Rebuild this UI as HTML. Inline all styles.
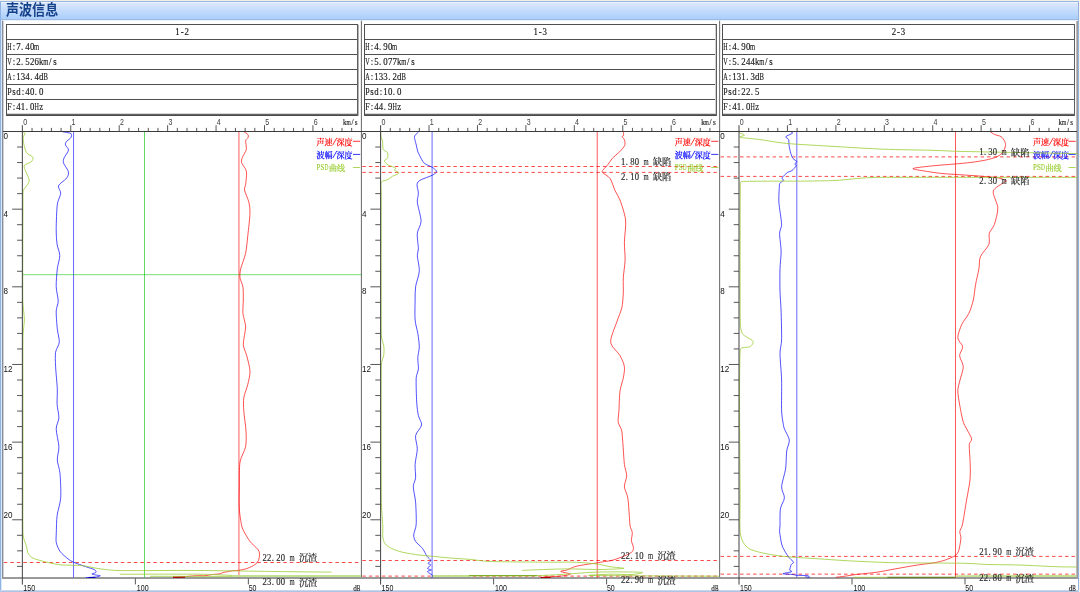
<!DOCTYPE html>
<html lang="zh"><head><meta charset="utf-8"><title>声波信息</title>
<style>
html,body{margin:0;padding:0;background:#fff;}
body{width:1080px;height:592px;overflow:hidden;font-family:"Liberation Sans",sans-serif;}
svg{display:block;will-change:transform;}
</style></head><body>
<svg width="1080" height="592" viewBox="0 0 1080 592">
<defs>
<linearGradient id="hg" x1="0" y1="0" x2="0" y2="1"><stop offset="0.1" stop-color="#dbe8fc"/><stop offset="0.95" stop-color="#abcefb"/></linearGradient>
</defs>
<rect x="0" y="0" width="1080" height="592" fill="#fff"/>
<rect x="0" y="0" width="1080" height="1" fill="#f1efe9"/>
<rect x="1079" y="0" width="1" height="592" fill="#f6f3ef"/>
<rect x="0" y="1" width="1079" height="19" fill="url(#hg)"/>
<rect x="0" y="1" width="1079" height="1" fill="#98b6de"/>
<rect x="1" y="2" width="1077" height="1" fill="#eef4fd"/>
<rect x="0" y="19" width="1079" height="1" fill="#9bbae6"/>
<rect x="1" y="20" width="1077" height="1" fill="#eaf1fb"/>
<rect x="0" y="2" width="1" height="590" fill="#8fb3e4"/>
<rect x="1" y="20" width="1" height="570" fill="#dce8f8"/>
<rect x="1078" y="2" width="1" height="590" fill="#94b2dc"/>
<rect x="0" y="590" width="1079" height="1" fill="#c6d7ee"/>
<rect x="0" y="591" width="1079" height="1" fill="#aec4e2"/>
<text transform="translate(5.9 15.45) scale(1 1.115)" font-family="'Liberation Sans','Noto Sans CJK SC',sans-serif" font-size="13.1" font-weight="bold" fill="#15428b">声波信息</text>
<path d="M6 24.5H358" stroke="#4f4f4f" stroke-width="1"/>
<path d="M6 39.5H358" stroke="#4f4f4f" stroke-width="1"/>
<path d="M6 54.5H358" stroke="#4f4f4f" stroke-width="1"/>
<path d="M6 69.5H358" stroke="#4f4f4f" stroke-width="1"/>
<path d="M6 84.5H358" stroke="#4f4f4f" stroke-width="1"/>
<path d="M6 99.5H358" stroke="#4f4f4f" stroke-width="1"/>
<path d="M7 113.5H357" stroke="#d6d6d6" stroke-width="1"/>
<path d="M6 114.5H358.1" stroke="#646464" stroke-width="1"/>
<path d="M6 115.5H358.1" stroke="#4a4a4a" stroke-width="1"/>
<path d="M6.5 24V116" stroke="#4f4f4f" stroke-width="1"/>
<path d="M357.5 24V116" stroke="#5e5e5e" stroke-width="1"/>
<path d="M358.5 24.5V116" stroke="#b2b2b2" stroke-width="1"/>
<g transform="translate(175.28 35.1)" font-family="Liberation Serif" font-size="9.8" fill="#1a1a1a" stroke="#1a1a1a" stroke-width="0.16" text-anchor="middle"><text transform="scale(0.9 1)" x="2.53 7.58 12.64" xml:space="preserve">1-2</text></g>
<g transform="translate(7.1 49.9)" font-family="Liberation Serif" font-size="9.8" fill="#1a1a1a" stroke="#1a1a1a" stroke-width="0.16" text-anchor="middle"><text transform="scale(0.624 1)" x="3.65" xml:space="preserve">H</text><text transform="scale(0.9 1)" x="7.58 12.64 16.78 22.75 27.81" xml:space="preserve">:7.40</text><text transform="scale(0.668 1)" x="44.27" xml:space="preserve">m</text></g>
<g transform="translate(7.1 64.9)" font-family="Liberation Serif" font-size="9.8" fill="#1a1a1a" stroke="#1a1a1a" stroke-width="0.16" text-anchor="middle"><text transform="scale(0.624 1)" x="3.65" xml:space="preserve">V</text><text transform="scale(0.9 1)" x="7.58 12.64 16.78 22.75 27.81 32.86 37.92" xml:space="preserve">:2.526k</text><text transform="scale(0.668 1)" x="57.9" xml:space="preserve">m</text><text transform="scale(0.9 1)" x="48.03 53.08" xml:space="preserve">/s</text></g>
<g transform="translate(7.1 79.9)" font-family="Liberation Serif" font-size="9.8" fill="#1a1a1a" stroke="#1a1a1a" stroke-width="0.16" text-anchor="middle"><text transform="scale(0.624 1)" x="3.65" xml:space="preserve">A</text><text transform="scale(0.9 1)" x="7.58 12.64 17.69 22.75 26.9 32.86 37.92" xml:space="preserve">:134.4d</text><text transform="scale(0.675 1)" x="57.3" xml:space="preserve">B</text></g>
<g transform="translate(7.1 94.9)" font-family="Liberation Serif" font-size="9.8" fill="#1a1a1a" stroke="#1a1a1a" stroke-width="0.16" text-anchor="middle"><text transform="scale(0.81 1)" x="2.81" xml:space="preserve">P</text><text transform="scale(0.9 1)" x="7.58 12.64 17.69 22.75 27.81 31.95 37.92" xml:space="preserve">sd:40.0</text></g>
<g transform="translate(7.1 109.9)" font-family="Liberation Serif" font-size="9.8" fill="#1a1a1a" stroke="#1a1a1a" stroke-width="0.16" text-anchor="middle"><text transform="scale(0.81 1)" x="2.81" xml:space="preserve">F</text><text transform="scale(0.9 1)" x="7.58 12.64 17.69 21.84 27.81" xml:space="preserve">:41.0</text><text transform="scale(0.624 1)" x="47.4" xml:space="preserve">H</text><text transform="scale(0.9 1)" x="37.92" xml:space="preserve">z</text></g>
<path d="M364 24.5H717" stroke="#4f4f4f" stroke-width="1"/>
<path d="M364 39.5H717" stroke="#4f4f4f" stroke-width="1"/>
<path d="M364 54.5H717" stroke="#4f4f4f" stroke-width="1"/>
<path d="M364 69.5H717" stroke="#4f4f4f" stroke-width="1"/>
<path d="M364 84.5H717" stroke="#4f4f4f" stroke-width="1"/>
<path d="M364 99.5H717" stroke="#4f4f4f" stroke-width="1"/>
<path d="M365 113.5H715.3" stroke="#d6d6d6" stroke-width="1"/>
<path d="M364 114.5H716.4" stroke="#646464" stroke-width="1"/>
<path d="M364 115.5H716.4" stroke="#4a4a4a" stroke-width="1"/>
<path d="M364.5 24V116" stroke="#4f4f4f" stroke-width="1"/>
<path d="M716.5 24V116" stroke="#5e5e5e" stroke-width="1"/>
<path d="M715.5 25V114" stroke="#d0d0d0" stroke-width="1"/>
<g transform="translate(533.42 35.1)" font-family="Liberation Serif" font-size="9.8" fill="#1a1a1a" stroke="#1a1a1a" stroke-width="0.16" text-anchor="middle"><text transform="scale(0.9 1)" x="2.53 7.58 12.64" xml:space="preserve">1-3</text></g>
<g transform="translate(365.1 49.9)" font-family="Liberation Serif" font-size="9.8" fill="#1a1a1a" stroke="#1a1a1a" stroke-width="0.16" text-anchor="middle"><text transform="scale(0.624 1)" x="3.65" xml:space="preserve">H</text><text transform="scale(0.9 1)" x="7.58 12.64 16.78 22.75 27.81" xml:space="preserve">:4.90</text><text transform="scale(0.668 1)" x="44.27" xml:space="preserve">m</text></g>
<g transform="translate(365.1 64.9)" font-family="Liberation Serif" font-size="9.8" fill="#1a1a1a" stroke="#1a1a1a" stroke-width="0.16" text-anchor="middle"><text transform="scale(0.624 1)" x="3.65" xml:space="preserve">V</text><text transform="scale(0.9 1)" x="7.58 12.64 16.78 22.75 27.81 32.86 37.92" xml:space="preserve">:5.077k</text><text transform="scale(0.668 1)" x="57.9" xml:space="preserve">m</text><text transform="scale(0.9 1)" x="48.03 53.08" xml:space="preserve">/s</text></g>
<g transform="translate(365.1 79.9)" font-family="Liberation Serif" font-size="9.8" fill="#1a1a1a" stroke="#1a1a1a" stroke-width="0.16" text-anchor="middle"><text transform="scale(0.624 1)" x="3.65" xml:space="preserve">A</text><text transform="scale(0.9 1)" x="7.58 12.64 17.69 22.75 26.9 32.86 37.92" xml:space="preserve">:133.2d</text><text transform="scale(0.675 1)" x="57.3" xml:space="preserve">B</text></g>
<g transform="translate(365.1 94.9)" font-family="Liberation Serif" font-size="9.8" fill="#1a1a1a" stroke="#1a1a1a" stroke-width="0.16" text-anchor="middle"><text transform="scale(0.81 1)" x="2.81" xml:space="preserve">P</text><text transform="scale(0.9 1)" x="7.58 12.64 17.69 22.75 27.81 31.95 37.92" xml:space="preserve">sd:10.0</text></g>
<g transform="translate(365.1 109.9)" font-family="Liberation Serif" font-size="9.8" fill="#1a1a1a" stroke="#1a1a1a" stroke-width="0.16" text-anchor="middle"><text transform="scale(0.81 1)" x="2.81" xml:space="preserve">F</text><text transform="scale(0.9 1)" x="7.58 12.64 17.69 21.84 27.81" xml:space="preserve">:44.9</text><text transform="scale(0.624 1)" x="47.4" xml:space="preserve">H</text><text transform="scale(0.9 1)" x="37.92" xml:space="preserve">z</text></g>
<path d="M722 24.5H1075" stroke="#4f4f4f" stroke-width="1"/>
<path d="M722 39.5H1075" stroke="#4f4f4f" stroke-width="1"/>
<path d="M722 54.5H1075" stroke="#4f4f4f" stroke-width="1"/>
<path d="M722 69.5H1075" stroke="#4f4f4f" stroke-width="1"/>
<path d="M722 84.5H1075" stroke="#4f4f4f" stroke-width="1"/>
<path d="M722 99.5H1075" stroke="#4f4f4f" stroke-width="1"/>
<path d="M723 113.5H1073.8" stroke="#d6d6d6" stroke-width="1"/>
<path d="M722 114.5H1074.9" stroke="#646464" stroke-width="1"/>
<path d="M722 115.5H1074.9" stroke="#4a4a4a" stroke-width="1"/>
<path d="M722.5 24V116" stroke="#4f4f4f" stroke-width="1"/>
<path d="M1074.5 24V116" stroke="#5e5e5e" stroke-width="1"/>
<g transform="translate(891.67 35.1)" font-family="Liberation Serif" font-size="9.8" fill="#1a1a1a" stroke="#1a1a1a" stroke-width="0.16" text-anchor="middle"><text transform="scale(0.9 1)" x="2.53 7.58 12.64" xml:space="preserve">2-3</text></g>
<g transform="translate(723.1 49.9)" font-family="Liberation Serif" font-size="9.8" fill="#1a1a1a" stroke="#1a1a1a" stroke-width="0.16" text-anchor="middle"><text transform="scale(0.624 1)" x="3.65" xml:space="preserve">H</text><text transform="scale(0.9 1)" x="7.58 12.64 16.78 22.75 27.81" xml:space="preserve">:4.90</text><text transform="scale(0.668 1)" x="44.27" xml:space="preserve">m</text></g>
<g transform="translate(723.1 64.9)" font-family="Liberation Serif" font-size="9.8" fill="#1a1a1a" stroke="#1a1a1a" stroke-width="0.16" text-anchor="middle"><text transform="scale(0.624 1)" x="3.65" xml:space="preserve">V</text><text transform="scale(0.9 1)" x="7.58 12.64 16.78 22.75 27.81 32.86 37.92" xml:space="preserve">:5.244k</text><text transform="scale(0.668 1)" x="57.9" xml:space="preserve">m</text><text transform="scale(0.9 1)" x="48.03 53.08" xml:space="preserve">/s</text></g>
<g transform="translate(723.1 79.9)" font-family="Liberation Serif" font-size="9.8" fill="#1a1a1a" stroke="#1a1a1a" stroke-width="0.16" text-anchor="middle"><text transform="scale(0.624 1)" x="3.65" xml:space="preserve">A</text><text transform="scale(0.9 1)" x="7.58 12.64 17.69 22.75 26.9 32.86 37.92" xml:space="preserve">:131.3d</text><text transform="scale(0.675 1)" x="57.3" xml:space="preserve">B</text></g>
<g transform="translate(723.1 94.9)" font-family="Liberation Serif" font-size="9.8" fill="#1a1a1a" stroke="#1a1a1a" stroke-width="0.16" text-anchor="middle"><text transform="scale(0.81 1)" x="2.81" xml:space="preserve">P</text><text transform="scale(0.9 1)" x="7.58 12.64 17.69 22.75 27.81 31.95 37.92" xml:space="preserve">sd:22.5</text></g>
<g transform="translate(723.1 109.9)" font-family="Liberation Serif" font-size="9.8" fill="#1a1a1a" stroke="#1a1a1a" stroke-width="0.16" text-anchor="middle"><text transform="scale(0.81 1)" x="2.81" xml:space="preserve">F</text><text transform="scale(0.9 1)" x="7.58 12.64 17.69 21.84 27.81" xml:space="preserve">:41.0</text><text transform="scale(0.624 1)" x="47.4" xml:space="preserve">H</text><text transform="scale(0.9 1)" x="37.92" xml:space="preserve">z</text></g>
<path d="M2.7 20.8V578.9" stroke="#888c96" stroke-width="1.4"/>
<rect x="1076" y="21" width="1" height="558" fill="#bdbdbd"/><rect x="1077" y="21" width="1" height="558" fill="#9a9a98"/>
<path d="M361.44 20.8V578" stroke="#777" stroke-width="1.12"/>
<path d="M719.59 20.8V578" stroke="#777" stroke-width="1.12"/>
<path d="M2.25 578H1077.7" stroke="#9a9a9a" stroke-width="1.8"/>
<path d="M3.35 562.5H361.2" stroke="#ff0000" stroke-width="0.72" stroke-dasharray="3.5 3" stroke-dashoffset="-0.5"/>
<path d="M353 141.3H360.2" stroke="#ff0000" stroke-width="0.8"/>
<text x="316.5" y="144.5" font-family="'Liberation Serif','Noto Serif CJK SC',serif" font-size="8" fill="#ff0000" stroke="#ff0000" stroke-width="0.2">声速</text>
<path d="M332.8 144.9L336.8 137.8" stroke="#ff0000" stroke-width="0.8"/>
<text x="336.5" y="144.5" font-family="'Liberation Serif','Noto Serif CJK SC',serif" font-size="8" fill="#ff0000" stroke="#ff0000" stroke-width="0.2">深度</text>
<path d="M353 154.4H360.2" stroke="#0000ff" stroke-width="0.8"/>
<text x="316.5" y="157.6" font-family="'Liberation Serif','Noto Serif CJK SC',serif" font-size="8" fill="#0000ff" stroke="#0000ff" stroke-width="0.2">波幅</text>
<path d="M332.8 158L336.8 150.9" stroke="#0000ff" stroke-width="0.8"/>
<text x="336.5" y="157.6" font-family="'Liberation Serif','Noto Serif CJK SC',serif" font-size="8" fill="#0000ff" stroke="#0000ff" stroke-width="0.2">深度</text>
<path d="M353 167.5H360.2" stroke="#9acd32" stroke-width="0.8"/>
<g transform="translate(316.5 170.4)" font-family="Liberation Serif" font-size="8.4" fill="#9acd32" stroke="#9acd32" stroke-width="0.16" text-anchor="middle"><text transform="scale(0.831 1)" x="2.41 7.22" xml:space="preserve">PS</text><text transform="scale(0.64 1)" x="15.62" xml:space="preserve">D</text></g>
<text x="329.1" y="170.7" font-family="'Liberation Serif','Noto Serif CJK SC',serif" font-size="8" fill="#9acd32" stroke="#9acd32" stroke-width="0.2">曲线</text>
<path d="M238.94 131.5V577.5" stroke="#ff0000" stroke-width="0.65"/>
<path d="M73.55 131.5V577.5" stroke="#0000ff" stroke-width="0.6"/>
<path d="M144.5 131.5V577.5" stroke="#00c200" stroke-width="0.62"/>
<path d="M22.35 274.7H361.5" stroke="#00c200" stroke-width="0.55"/>
<path d="M244 131.7C244.55 132.09 247.31 133.72 247.9 134.5C248.49 135.28 248.51 136.45 248.2 137.3C247.89 138.15 245.93 139.13 245.7 140.6C245.43 142.31 246.76 147.16 246.3 149.5C245.84 151.84 243.07 155.51 242.4 157.3C241.76 159.01 241.11 160.73 241.5 162.3C241.89 163.87 244.49 167.02 245.2 168.5C245.91 169.98 246.55 171.24 246.6 172.9C246.67 175.08 245.99 181.71 245.7 184.1C245.44 186.25 244.12 187.87 244.5 190C244.95 192.53 248.13 198.94 248.9 202.2C249.67 205.46 250.13 209.29 250 213.3C249.85 217.98 248.42 230 247.8 235.6C247.18 241.2 246.59 248.64 245.6 253.3C244.61 257.96 241.48 265.47 240.7 268.9C239.98 272.03 239.69 275.31 240 277.8C240.31 280.29 242.44 283.59 242.9 286.7C243.36 289.81 243.3 296.28 243.3 300C243.3 303.72 242.58 309.56 242.9 313.3C243.22 317.04 245.54 322.35 245.6 326.7C245.66 331.05 243.15 340.35 243.3 344.4C243.45 348.45 245.76 351.86 246.7 355.6C247.64 359.34 249.85 367.07 250 371.1C250.15 375.13 248.67 380.66 247.8 384.4C246.93 388.14 244.36 394.06 243.8 397.8C243.24 401.54 243.49 406.45 243.8 411.1C244.11 415.75 245.75 426.02 246 431C246.25 435.98 246.44 442.33 245.6 446.7C244.76 451.07 240.88 456.6 240 462.2C239.12 467.8 239.4 480.16 239.3 486.7C239.2 493.24 238.96 503.4 239.3 508.9C239.64 514.4 241.04 522.82 241.7 526C242.14 528.13 242.97 529.68 244 531.6C245.18 533.78 248.15 539.11 250.1 541.6C252.05 544.09 256.57 547.68 257.9 549.4C258.96 550.77 259.53 552.33 259.6 553.9C259.67 555.47 259.03 559.12 258.4 560.6C257.77 562.08 256.6 563.44 255.1 564.5C253.55 565.59 249.64 567.57 247.3 568.4C244.96 569.23 240.47 570.08 238.4 570.4C236.33 570.72 234.03 570.5 232.5 570.7C230.97 570.9 228.79 571.56 227.5 571.8C226.21 572.04 224.35 572.12 223.3 572.4C222.25 572.68 221.27 573.55 220 573.8C218.49 574.09 214.6 574.23 212.5 574.5C210.4 574.77 207.21 575.53 205 575.7C202.79 575.87 199.5 575.57 196.7 575.7C193.9 575.83 188.32 576.36 185 576.6C181.68 576.84 174.68 577.29 173 577.4" fill="none" stroke="#ff0000" stroke-width="0.68" stroke-linejoin="round"/>
<path d="M62.4 131.7C63.58 131.94 69.53 132.78 70.8 133.4C71.7 133.84 71.58 135.4 71.5 136.1C71.42 136.8 70.85 137.7 70.2 138.4C69.47 139.18 66.96 140.76 66.3 141.7C65.64 142.64 65.19 143.92 65.5 145.1C65.81 146.28 68.7 148.31 68.5 150.1C68.3 151.89 64.8 156.11 64.1 157.9C63.44 159.59 62.97 161.17 63.5 162.9C64.05 164.69 67.34 168.98 68 170.7C68.58 172.21 68.52 174.02 68.2 175.2C67.88 176.38 66.83 177.87 65.7 179.1C64.34 180.58 59.2 183.81 58.5 185.8C57.8 187.79 60.87 190.7 60.7 193.3C60.53 195.9 57.82 200.25 57.3 204.4C56.67 209.38 56.23 223.3 56.2 228.9C56.17 234.49 56.6 240.66 57.1 244.4C57.6 248.14 59.77 252.17 59.8 255.6C59.83 259.03 57.8 264.55 57.3 268.9C56.8 273.25 56.07 282.19 56.2 286.7C56.33 291.21 58.2 297.68 58.2 301.1C58.2 304.52 56.32 307.43 56.2 311.1C56.07 314.99 56.87 324.55 57.3 328.9C57.73 333.25 59.54 338.94 59.3 342.2C59.06 345.46 56.12 348.77 55.6 352.2C55.08 355.63 55.36 361.56 55.6 366.7C55.84 371.84 57.09 383.62 57.3 388.9C57.51 394.18 56.88 400.35 57.1 404.4C57.32 408.45 59.03 414.37 58.9 417.8C58.77 421.23 56.2 424.85 56.2 428.9C56.2 432.95 58.75 442.35 58.9 446.7C59.05 451.05 57.15 456.28 57.3 460C57.45 463.72 59.56 468.43 60 473.3C60.48 478.59 61.11 491.88 60.7 497.8C60.29 503.72 57.72 510.71 57.1 515.6C56.48 520.49 56.41 528.91 56.3 532.7C56.19 536.3 55.75 540.05 56.3 542.7C56.85 545.35 58.56 549.33 60.2 551.6C61.84 553.87 66.14 557.42 68 558.9C69.81 560.34 71.39 561.27 73.5 562.2C75.99 563.29 82.9 565.68 85.8 566.7C88.7 567.72 92.76 568.83 94.2 569.5C95.1 569.92 95.95 571.04 96.1 571.5C96.25 571.96 95.78 572.53 95.3 572.8C94.71 573.14 91.83 573.59 91.9 573.9C91.97 574.21 94.62 574.73 95.8 575C96.98 575.27 100.45 575.48 100.3 575.8C100.15 576.12 96.7 577.06 94.7 577.3C92.7 577.54 87.22 577.47 86 577.5" fill="none" stroke="#0000ff" stroke-width="0.68" stroke-linejoin="round"/>
<path d="M22.5 131.7C22.85 131.94 24.9 132.62 25 133.4C25.1 134.18 23.35 135.76 23.2 137.3C23.05 138.85 23.41 142.32 23.9 144.5C24.39 146.68 25.44 151.11 26.7 152.9C27.96 154.69 32.27 156.05 32.9 157.3C33.53 158.55 32.38 160.71 31.2 161.8C30.02 162.89 25.37 164.01 24.5 165.1C23.63 166.19 24.52 168.04 25 169.6C25.66 171.71 28.96 177.93 29.2 180.2C29.43 182.4 27.53 184.36 26.7 185.8C25.87 187.24 23.82 188.51 23.3 190.5C22.78 192.49 23.02 196.58 23 200C22.93 215.33 22.6 283.2 22.8 300C22.88 307.22 24.37 315.1 24.4 320C24.43 324.9 23.06 329.58 23 335C22.8 353.2 23.01 423.26 23 450C22.99 476.74 22.84 513.81 22.9 526C22.92 530 22.87 534.13 23.4 537.1C23.93 540.07 26.08 545 26.7 547.2C27.25 549.18 27.02 551.32 27.8 552.8C28.58 554.28 30.27 556.64 32.3 557.8C34.33 558.96 39.18 560.25 42.3 561.1C45.42 561.95 51.79 563.35 54.6 563.9C57.38 564.44 59.57 564.83 62.4 565C66.31 565.24 77.66 565.12 82.5 565.6C87.34 566.08 92.48 567.73 97 568.4C101.52 569.07 109.48 570.09 114.8 570.4C120.12 570.71 127.73 570.59 135 570.6C146.93 570.61 178.3 570.35 200 570.5C221.7 570.65 271.59 571.48 290 571.7C304.94 571.88 325.69 572.04 331.5 572.1" fill="none" stroke="#9acd32" stroke-width="0.8" stroke-linejoin="round"/>
<path d="M119.8 574.2C131.03 574.2 184.29 574.03 200 574.2C211.53 574.32 227.52 575.23 232 575.4" fill="none" stroke="#9acd32" stroke-width="0.8" stroke-linejoin="round"/>
<path d="M150 576.3 L232 576.4" fill="none" stroke="#9acd32" stroke-width="0.8" stroke-linejoin="round"/>
<path d="M232 576L361 576" fill="none" stroke="#c2e28f" stroke-width="1.9" stroke-linejoin="round"/>
<path d="M173 577.4L185 577.3" fill="none" stroke="#a80000" stroke-width="1.1" stroke-linejoin="round"/>
<path d="M88.6 577.5L95.3 577.4" fill="none" stroke="#0000b8" stroke-width="1.1" stroke-linejoin="round"/>
<g transform="translate(262.35 560.9)" font-family="Liberation Serif" font-size="9.6" fill="#2a2a2a" stroke="#2a2a2a" stroke-width="0.16" text-anchor="middle"><text transform="scale(0.9 1)" x="2.54 7.62 11.78 17.77 22.85" xml:space="preserve">22.20</text><text transform="scale(0.685 1)" x="43.36" xml:space="preserve">m</text></g>
<text x="298.91" y="561.2" font-family="'Liberation Serif','Noto Serif CJK SC',serif" font-size="9.15" fill="#2a2a2a" stroke="#2a2a2a" stroke-width="0.2">沉渣</text>
<g transform="translate(262.35 585.2)" font-family="Liberation Serif" font-size="9.6" fill="#2a2a2a" stroke="#2a2a2a" stroke-width="0.16" text-anchor="middle"><text transform="scale(0.9 1)" x="2.54 7.62 11.78 17.77 22.85" xml:space="preserve">23.00</text><text transform="scale(0.685 1)" x="43.36" xml:space="preserve">m</text></g>
<text x="298.91" y="585.5" font-family="'Liberation Serif','Noto Serif CJK SC',serif" font-size="9.15" fill="#2a2a2a" stroke="#2a2a2a" stroke-width="0.2">沉渣</text>
<path d="M361.9 166.5H719.35" stroke="#ff0000" stroke-width="0.72" stroke-dasharray="3.5 3" stroke-dashoffset="-0.5"/>
<path d="M361.9 172.4H719.35" stroke="#ff0000" stroke-width="0.72" stroke-dasharray="3.5 3" stroke-dashoffset="-0.5"/>
<path d="M361.9 560.5H719.35" stroke="#ff0000" stroke-width="0.72" stroke-dasharray="3.5 3" stroke-dashoffset="-0.5"/>
<path d="M361.9 576.1H719.35" stroke="#ff0000" stroke-width="0.72" stroke-dasharray="3.5 3" stroke-dashoffset="-0.5"/>
<path d="M711.15 141.3H718.35" stroke="#ff0000" stroke-width="0.8"/>
<text x="674.65" y="144.5" font-family="'Liberation Serif','Noto Serif CJK SC',serif" font-size="8" fill="#ff0000" stroke="#ff0000" stroke-width="0.2">声速</text>
<path d="M690.95 144.9L694.95 137.8" stroke="#ff0000" stroke-width="0.8"/>
<text x="694.65" y="144.5" font-family="'Liberation Serif','Noto Serif CJK SC',serif" font-size="8" fill="#ff0000" stroke="#ff0000" stroke-width="0.2">深度</text>
<path d="M711.15 154.4H718.35" stroke="#0000ff" stroke-width="0.8"/>
<text x="674.65" y="157.6" font-family="'Liberation Serif','Noto Serif CJK SC',serif" font-size="8" fill="#0000ff" stroke="#0000ff" stroke-width="0.2">波幅</text>
<path d="M690.95 158L694.95 150.9" stroke="#0000ff" stroke-width="0.8"/>
<text x="694.65" y="157.6" font-family="'Liberation Serif','Noto Serif CJK SC',serif" font-size="8" fill="#0000ff" stroke="#0000ff" stroke-width="0.2">深度</text>
<path d="M711.15 167.5H718.35" stroke="#9acd32" stroke-width="0.8"/>
<g transform="translate(674.65 170.4)" font-family="Liberation Serif" font-size="8.4" fill="#9acd32" stroke="#9acd32" stroke-width="0.16" text-anchor="middle"><text transform="scale(0.831 1)" x="2.41 7.22" xml:space="preserve">PS</text><text transform="scale(0.64 1)" x="15.62" xml:space="preserve">D</text></g>
<text x="687.25" y="170.7" font-family="'Liberation Serif','Noto Serif CJK SC',serif" font-size="8" fill="#9acd32" stroke="#9acd32" stroke-width="0.2">曲线</text>
<path d="M597.22 131.5V577.5" stroke="#ff0000" stroke-width="0.65"/>
<path d="M432.08 131.5V577.5" stroke="#0000ff" stroke-width="0.6"/>
<path d="M623.5 131.7C623.5 132.25 623.7 134.9 623.5 135.6C623.33 136.22 621.95 136.08 622.1 136.7C622.25 137.33 624.25 138.85 624.6 140.1C624.95 141.35 625.3 143.96 624.6 145.6C623.9 147.24 621.32 150.01 619.6 151.8C617.88 153.59 613.94 156.61 612.3 158.4C610.66 160.19 609.15 163.03 607.9 164.6C606.65 166.17 604.18 168.51 603.4 169.6C602.77 170.48 601.65 171.53 602.3 172.4C603.24 173.65 608.31 175.92 610.1 178.5C611.89 181.08 613.71 187.79 615.1 190.8C616.49 193.81 618.73 196.47 620 200C621.47 204.09 624.98 214.09 625.6 220C626.22 225.91 624.47 236.6 624.4 242.2C624.33 247.8 625.25 255.02 625.1 260C624.95 264.98 623.55 273.14 623.3 277.8C623.05 282.46 623.51 289.1 623.3 293.3C623.09 297.5 622.72 303.75 621.8 307.8C620.88 311.85 618.25 317.38 616.7 322.2C615.15 327.02 610.24 337.52 610.7 342.2C611.16 346.88 618.08 352.17 620 355.6C621.92 359.03 623.94 363.59 624.4 366.7C624.86 369.81 623.92 374.38 623.3 377.8C622.68 381.22 620.62 386.44 620 391.1C619.38 395.76 619.15 406.75 618.9 411.1C618.67 415.1 617.79 419.4 618.2 422.2C618.61 425 621.3 427.68 621.8 431.1C622.67 437.01 623.71 458.17 624.4 464.4C624.85 468.49 626.7 472.48 626.7 475.6C626.7 478.72 624.25 483.59 624.4 486.7C624.55 489.81 627.11 493.75 627.8 497.8C628.49 501.85 628.98 511.65 629.3 515.6C629.61 519.34 629.68 523.61 630.1 526C630.52 528.39 632.12 530.67 632.3 532.7C632.48 534.73 631.25 538.47 631.4 540.5C631.55 542.53 633.27 545.65 633.4 547.2C633.53 548.75 633.24 550.51 632.3 551.6C631.36 552.69 628.84 554 626.7 555C624.52 556.02 619.04 558.09 616.7 558.9C614.36 559.71 611.67 560.44 610 560.8C608.33 561.16 606.66 561.2 604.8 561.5C602.83 561.82 598.55 562.68 595.9 563.1C593.25 563.52 588.87 564 585.9 564.5C582.93 565 577.36 565.93 574.7 566.7C572.04 567.47 568.85 569.33 566.9 570C564.95 570.67 560.32 570.91 560.8 571.5C561.28 572.09 570.54 573.51 570.3 574.2C570.06 574.89 561.76 576.05 559.1 576.4C556.44 576.75 553.88 576.55 551.3 576.7C548.72 576.85 542.18 577.39 540.7 577.5" fill="none" stroke="#ff0000" stroke-width="0.68" stroke-linejoin="round"/>
<path d="M418.5 131.7C417.95 132.32 415.15 135.16 414.6 136.1C414.18 136.82 414.45 137.59 414.6 138.4C414.84 139.66 415.84 143.22 416.3 145.1C416.76 146.98 417.13 149.77 417.9 151.8C418.67 153.83 420.86 157.96 421.8 159.6C422.66 161.1 423.21 162.48 424.6 163.5C426.08 164.59 430.76 166.39 432.4 167.4C433.97 168.36 435.75 170 436.3 170.7C436.68 171.18 436.7 171.94 436.3 172.4C435.75 173.03 433.96 174.45 432.4 175.2C430.15 176.29 422.36 178.93 420.2 180.2C418.59 181.15 417.25 182.47 417 184.3C416.75 186.13 418.36 190.79 418.4 193.3C418.44 195.81 416.99 198.99 417.3 202.2C417.68 206.09 421.1 216.75 421.1 221.1C421.1 225.45 417.68 229.41 417.3 233.3C416.92 237.19 418.4 245.78 418.4 248.9C418.4 251.34 417.2 253.16 417.3 255.6C417.43 258.71 419.54 266.75 419.3 271.1C419.06 275.45 416.19 282.65 415.6 286.7C415.01 290.75 415.17 295.34 415.1 300C415.03 304.66 414.72 315.34 415.1 320C415.48 324.66 417.21 329.56 417.8 333.3C418.39 337.04 419.3 343.27 419.3 346.7C419.3 350.13 417.93 354.69 417.8 357.8C417.67 360.91 418.62 366.1 418.4 368.9C418.18 371.7 416.37 374.5 416.2 377.8C415.96 382.46 416.39 396.91 416.7 402.2C416.98 407.05 417.71 412.41 418.4 415.6C419.09 418.79 421.99 422.2 421.6 425C421.21 427.8 416.2 432.25 415.6 435.6C415 438.95 417.37 444.87 417.3 448.9C417.23 452.93 415.34 460.35 415.1 464.4C414.86 468.45 415.85 474.68 415.6 477.8C415.35 480.92 413.3 483.39 413.3 486.7C413.3 490.12 415.19 496.92 415.6 502.2C416.01 507.48 416.47 519.82 416.2 524.4C415.97 528.28 413.77 532.49 413.7 534.9C413.63 537.31 414.48 539.72 415.7 541.6C416.92 543.48 420.83 546.27 422.4 548.3C423.97 550.33 425.72 554.38 426.9 556.1C428.08 557.82 430.65 559.59 430.8 560.6C430.95 561.61 428 562.68 428 563.3C428 563.92 430.88 564.29 430.8 565C430.72 565.71 427.33 567.7 427.4 568.4C427.47 569.1 431.3 569.54 431.3 570C431.3 570.46 427.16 570.92 427.4 571.7C427.64 572.48 432.37 574.82 433 575.6C433.46 576.17 432.05 577.06 431.9 577.3" fill="none" stroke="#0000ff" stroke-width="0.68" stroke-linejoin="round"/>
<path d="M380.6 131.7C380.67 132.48 380.83 136.05 381.1 137.3C381.37 138.55 382.28 139.33 382.5 140.6C382.79 142.31 382.53 147.86 383.2 149.5C383.87 151.14 386.68 151.12 387.3 152.3C387.92 153.48 388.02 156.7 387.6 157.9C387.18 159.1 384.19 159.89 384.3 160.9C384.41 161.91 386.82 164.12 388.4 165.1C389.98 166.08 394.75 167.19 395.6 167.9C396.3 168.49 394.11 169.57 394.5 170.2C394.89 170.83 397.92 171.85 398.4 172.4C398.82 172.88 398.44 173.76 397.9 174.1C397.05 174.65 393.71 175.53 392.3 176.3C390.89 177.07 389.34 178.79 387.8 179.6C386.26 180.41 382.22 180.53 381.3 182.1C380.38 183.67 381.2 187.67 381.2 190.8C381.2 212.21 380.94 313.27 381.3 335C381.37 339.06 383.45 343.2 383.8 346C384.15 348.8 384.15 352.34 383.8 355C383.45 357.66 381.36 361.29 381.3 365C380.95 385.3 381.09 477.46 381.3 500C381.39 509.38 382.59 520.81 382.8 526C382.96 529.99 382.48 534.61 382.8 537.1C383.12 539.59 383.92 542.23 385.1 543.8C386.28 545.37 388.79 547.12 391.2 548.3C393.61 549.48 398.39 551.26 402.3 552.2C406.21 553.14 414.89 554.43 419.1 555C423.31 555.57 427.61 555.84 432.4 556.3C437.23 556.76 448.29 557.87 453.6 558.3C458.91 558.73 465.2 558.95 470.3 559.4C475.4 559.85 482.87 561.25 490 561.5C501.34 561.89 539.44 562.1 551.3 562.2C559.72 562.27 568.44 561.96 574.7 562.2C580.96 562.44 591.06 563.27 596 563.9C600.94 564.53 606.09 566.07 610 566.7C613.91 567.33 625.3 568.01 623.9 568.4C622.5 568.79 607.83 569.43 600 569.5C592.17 569.57 575.91 568.9 568 568.9C560.09 568.9 549.97 569.29 543.5 569.5C537.03 569.71 524.84 570.27 521.8 570.4" fill="none" stroke="#9acd32" stroke-width="0.8" stroke-linejoin="round"/>
<path d="M432 576C440.12 575.94 475.33 575.66 490 575.6C504.67 575.54 527 575.75 536.8 575.6C545.16 575.47 551.65 574.98 560 574.5C568.85 574 588.55 572.31 600 572C611.45 571.69 637.32 571.95 641.8 572.3C645.4 572.58 635.61 574.28 632 574.5C627.55 574.77 615.88 574.06 610 574.2C604.12 574.34 582.79 575.37 590 575.5C605.26 575.78 700.94 576.1 719 576.2" fill="none" stroke="#9acd32" stroke-width="0.8" stroke-linejoin="round"/>
<path d="M433 576.1L470 576.1" fill="none" stroke="#c2e28f" stroke-width="1.9" stroke-linejoin="round"/>
<path d="M540.7 577.5L550.8 577.4" fill="none" stroke="#a80000" stroke-width="1.1" stroke-linejoin="round"/>
<path d="M469 575.7L537 575.7" fill="none" stroke="#7fae28" stroke-width="1.3" stroke-linejoin="round"/>
<g transform="translate(620.9 164.9)" font-family="Liberation Serif" font-size="9.6" fill="#2a2a2a" stroke="#2a2a2a" stroke-width="0.16" text-anchor="middle"><text transform="scale(0.9 1)" x="2.54 6.7 12.69 17.77" xml:space="preserve">1.80</text><text transform="scale(0.685 1)" x="36.69" xml:space="preserve">m</text></g>
<text x="652.89" y="165.2" font-family="'Liberation Serif','Noto Serif CJK SC',serif" font-size="9.15" fill="#2a2a2a" stroke="#2a2a2a" stroke-width="0.2">缺陷</text>
<g transform="translate(620.9 179.6)" font-family="Liberation Serif" font-size="9.6" fill="#2a2a2a" stroke="#2a2a2a" stroke-width="0.16" text-anchor="middle"><text transform="scale(0.9 1)" x="2.54 6.7 12.69 17.77" xml:space="preserve">2.10</text><text transform="scale(0.685 1)" x="36.69" xml:space="preserve">m</text></g>
<text x="652.89" y="179.9" font-family="'Liberation Serif','Noto Serif CJK SC',serif" font-size="9.15" fill="#2a2a2a" stroke="#2a2a2a" stroke-width="0.2">缺陷</text>
<g transform="translate(620.9 558.9)" font-family="Liberation Serif" font-size="9.6" fill="#2a2a2a" stroke="#2a2a2a" stroke-width="0.16" text-anchor="middle"><text transform="scale(0.9 1)" x="2.54 7.62 11.78 17.77 22.85" xml:space="preserve">22.10</text><text transform="scale(0.685 1)" x="43.36" xml:space="preserve">m</text></g>
<text x="657.46" y="559.2" font-family="'Liberation Serif','Noto Serif CJK SC',serif" font-size="9.15" fill="#2a2a2a" stroke="#2a2a2a" stroke-width="0.2">沉渣</text>
<g transform="translate(620.9 583.3)" font-family="Liberation Serif" font-size="9.6" fill="#2a2a2a" stroke="#2a2a2a" stroke-width="0.16" text-anchor="middle"><text transform="scale(0.9 1)" x="2.54 7.62 11.78 17.77 22.85" xml:space="preserve">22.90</text><text transform="scale(0.685 1)" x="43.36" xml:space="preserve">m</text></g>
<text x="657.46" y="583.6" font-family="'Liberation Serif','Noto Serif CJK SC',serif" font-size="9.15" fill="#2a2a2a" stroke="#2a2a2a" stroke-width="0.2">沉渣</text>
<path d="M720.05 156.9H1076.7" stroke="#ff0000" stroke-width="0.72" stroke-dasharray="3.5 3" stroke-dashoffset="-0.5"/>
<path d="M720.05 176.4H1076.7" stroke="#ff0000" stroke-width="0.72" stroke-dasharray="3.5 3" stroke-dashoffset="-0.5"/>
<path d="M720.05 556.4H1076.7" stroke="#ff0000" stroke-width="0.72" stroke-dasharray="3.5 3" stroke-dashoffset="-0.5"/>
<path d="M720.05 574.15H1076.7" stroke="#ff0000" stroke-width="0.72" stroke-dasharray="3.5 3" stroke-dashoffset="-0.5"/>
<path d="M1068.5 141.3H1075.7" stroke="#ff0000" stroke-width="0.8"/>
<text x="1033" y="144.5" font-family="'Liberation Serif','Noto Serif CJK SC',serif" font-size="8" fill="#ff0000" stroke="#ff0000" stroke-width="0.2">声速</text>
<path d="M1049.3 144.9L1053.3 137.8" stroke="#ff0000" stroke-width="0.8"/>
<text x="1053" y="144.5" font-family="'Liberation Serif','Noto Serif CJK SC',serif" font-size="8" fill="#ff0000" stroke="#ff0000" stroke-width="0.2">深度</text>
<path d="M1068.5 154.4H1075.7" stroke="#0000ff" stroke-width="0.8"/>
<text x="1033" y="157.6" font-family="'Liberation Serif','Noto Serif CJK SC',serif" font-size="8" fill="#0000ff" stroke="#0000ff" stroke-width="0.2">波幅</text>
<path d="M1049.3 158L1053.3 150.9" stroke="#0000ff" stroke-width="0.8"/>
<text x="1053" y="157.6" font-family="'Liberation Serif','Noto Serif CJK SC',serif" font-size="8" fill="#0000ff" stroke="#0000ff" stroke-width="0.2">深度</text>
<path d="M1068.5 167.5H1075.7" stroke="#9acd32" stroke-width="0.8"/>
<g transform="translate(1033 170.4)" font-family="Liberation Serif" font-size="8.4" fill="#9acd32" stroke="#9acd32" stroke-width="0.16" text-anchor="middle"><text transform="scale(0.831 1)" x="2.41 7.22" xml:space="preserve">PS</text><text transform="scale(0.64 1)" x="15.62" xml:space="preserve">D</text></g>
<text x="1045.6" y="170.7" font-family="'Liberation Serif','Noto Serif CJK SC',serif" font-size="8" fill="#9acd32" stroke="#9acd32" stroke-width="0.2">曲线</text>
<path d="M955.5 131.5V577.5" stroke="#ff0000" stroke-width="0.65"/>
<path d="M796.82 131.5V577.5" stroke="#0000ff" stroke-width="0.6"/>
<path d="M990.3 131.7C990.9 132.09 993.07 133.8 994.6 134.5C996.13 135.2 999.8 135.76 1001.2 136.7C1002.6 137.64 1004 139.95 1004.6 141.2C1005.2 142.45 1005.74 144.05 1005.5 145.6C1005.26 147.15 1004.12 150.73 1002.9 152.3C1001.68 153.87 999.22 155.71 996.8 156.8C994.38 157.89 989.2 159.32 985.6 160.1C982 160.88 975.38 161.85 971.1 162.4C966.82 162.95 960.17 163.54 955 164C949.83 164.46 940.08 165.07 934.2 165.7C928.32 166.33 913.94 167.69 913 168.5C912.06 169.31 923.44 170.8 927.5 171.5C931.56 172.2 938.15 173.09 942 173.5C945.85 173.91 950.45 174.09 955 174.4C959.55 174.71 969.74 175.35 974.5 175.7C979.26 176.05 985.57 176.58 989 176.9C992.43 177.22 996.58 177.45 999 178C1001.42 178.55 1005.54 180.21 1006.3 180.8C1006.97 181.32 1005.07 181.67 1004.4 182.2C1002.58 183.64 994.22 187.52 993.3 191.1C992.38 194.68 997.65 203.14 997.8 207.8C997.95 212.46 995.59 220.83 994.4 224.4C993.23 227.9 990.07 230.5 989.3 233.3C988.53 236.1 990.15 241.12 988.9 244.4C987.65 247.68 981.8 253.27 980.4 256.7C979 260.13 979.57 265.02 978.9 268.9C978.23 272.78 976.38 280.05 975.6 284.4C974.82 288.75 974.24 295.95 973.3 300C972.36 304.05 970.51 309.88 968.9 313.3C967.29 316.72 963.35 320.97 961.8 324.4C960.25 327.83 957.67 334.68 957.8 337.8C957.93 340.92 962.45 344.21 962.7 346.7C962.95 349.19 959.52 352.8 959.6 355.6C959.68 358.4 963.24 363.28 963.3 366.7C963.36 370.12 960.77 376.58 960 380C959.23 383.42 957.8 387.36 957.8 391.1C957.8 394.84 959.23 402.35 960 406.7C960.77 411.05 962.36 419.09 963.3 422.2C964.08 424.79 965.54 426.56 966.7 428.9C967.86 431.24 971.24 436.73 971.6 438.9C971.96 441.02 969.42 442.26 969.3 444.4C969.1 447.97 970.1 459.42 970.2 464.4C970.3 469.38 970.56 474.71 970 480C969.44 485.29 967.14 496.6 966.2 502.2C965.26 507.8 963.87 516.67 963.3 520C962.93 522.17 962.59 524.38 962.1 526C961.61 527.62 959.97 529.88 959.8 531.6C959.63 533.32 961.04 535.86 960.9 538.3C960.75 540.95 959.47 548.09 958.7 550.5C958.04 552.55 957.16 554.25 955.4 555.5C953.52 556.83 948.27 558.98 945.3 560C942.33 561.02 938.09 562.1 934.2 562.8C930.31 563.5 922.96 564.15 917.5 565C912.04 565.85 900.98 567.88 895.2 568.9C889.42 569.92 881.67 571.52 876.2 572.3C870.73 573.08 860.47 573.95 856.1 574.5C852.09 575 847.81 575.81 845 576.2C842.19 576.59 837.26 577.15 836 577.3" fill="none" stroke="#ff0000" stroke-width="0.68" stroke-linejoin="round"/>
<path d="M790.8 131.7C791.04 131.91 793.08 132.62 792.5 133.2C791.8 133.9 786.35 135.82 785.8 136.7C785.25 137.58 788.14 138.25 788.6 139.5C789.06 140.75 788.79 143.65 789.1 145.6C789.41 147.55 790.25 151.59 790.8 153.4C791.35 155.21 792.17 157.37 793 158.5C793.83 159.63 796.46 160.73 796.7 161.5C796.94 162.27 794.77 163.41 794.7 164C794.63 164.59 796.51 164.95 796.2 165.7C795.81 166.64 793.12 169.76 791.9 170.7C790.68 171.64 788.87 171.4 787.5 172.4C786.1 173.42 782.45 176.91 781.9 178C781.45 178.9 783.91 179.43 783.6 180.2C783.29 180.97 780.29 182.69 779.7 183.5C779.17 184.23 779.44 185.09 779.4 186C779.29 188.62 778.59 196.82 778.9 202.2C779.21 207.58 781.5 220.05 781.6 224.4C781.67 227.68 779.66 230.02 779.6 233.3C779.53 237.04 781.04 246.12 781.1 251.1C781.16 256.08 780.15 263.3 780 268.9C779.85 274.5 779.85 285.21 780 291.1C780.15 296.99 780.88 304.15 781.1 311C781.32 317.85 781.75 334.08 781.6 340C781.47 344.82 780 348.48 780 353.3C780 358.9 781.38 371.91 781.6 380C781.82 388.09 781.36 404.88 781.6 411.1C781.78 415.92 782.91 421.91 783.3 424.4C783.56 426.05 783.8 427.34 784.4 428.9C785.24 431.08 788.98 436.89 789.3 440C789.62 443.11 787.22 447.05 786.7 451.1C786.18 455.15 786.31 463.92 785.6 468.9C784.89 473.88 781.77 482.65 781.6 486.7C781.43 490.75 784.57 494.69 784.4 497.8C784.23 500.91 781.02 504.95 780.4 508.9C779.78 512.85 780.11 522.82 780 526C779.93 528.02 779.4 529.59 779.6 531.6C779.87 534.26 781.03 542.03 781.9 545C782.77 547.97 784.71 550.94 785.8 552.8C786.89 554.66 788.61 556.98 789.7 558.3C790.79 559.62 793.38 561.33 793.6 562.2C793.82 563.07 791.82 563.45 791.3 564.5C790.75 565.59 789.64 568.99 789.7 570C789.75 570.94 792.53 571.24 791.7 571.7C790.76 572.22 782.82 573.31 783 573.7C783.18 574.09 791.14 574.28 793 574.5C794.21 574.65 795.08 575.21 796.3 575.3C798.33 575.45 805.65 575.32 807.5 575.6C808.43 575.74 809.81 577.15 809.5 577.3C809.19 577.45 805.89 576.78 805.3 576.7" fill="none" stroke="#0000ff" stroke-width="0.68" stroke-linejoin="round"/>
<path d="M739.2 132.8C739.94 133.12 744.37 134.47 744.5 135.1C744.63 135.73 738.4 136.8 740.1 137.3C742.21 137.92 753.13 138.65 759.6 139.5C766.07 140.35 776.63 142.5 786.3 143.4C796.86 144.38 821.32 145.69 835 146.5C848.68 147.31 870.42 148.67 884 149.2C897.58 149.73 921.36 149.99 932 150.3C942.08 150.59 949.91 151.17 960 151.4C980.3 151.86 1060.62 153.29 1077 153.6" fill="none" stroke="#9acd32" stroke-width="0.8" stroke-linejoin="round"/>
<path d="M1077 177.4C1048.73 177.4 905.86 177.25 875.1 177.4C868.68 177.43 862.91 178.07 857.3 178.5C851.69 178.93 842.43 180.14 835 180.5C827.57 180.86 815.29 180.97 804.2 181.1C791.1 181.25 750.35 180.91 741.4 181.6C739.77 181.72 740.31 184.37 740.3 186C740.13 205.07 739.93 297.18 740.2 317.8C740.27 323.43 740.42 330.04 742.2 333.3C743.98 336.56 751.81 339.22 752.9 341.1C753.99 342.98 751.78 345.45 750 346.7C748.22 347.95 740.44 346.29 740.2 350C738.81 371.46 740.14 475.36 740.1 500C740.08 509.36 739.83 521.11 739.9 526C739.95 529.21 740.11 532.56 740.6 534.9C741.09 537.24 742.15 540.74 743.4 542.7C744.65 544.66 746.92 547.49 749.5 548.9C752.08 550.31 757.59 551.82 761.8 552.8C766.01 553.78 774.77 555.26 779.6 555.9C784.43 556.54 790.67 556.98 796.3 557.4C801.93 557.82 812.98 558.45 819.8 558.9C826.62 559.35 836.8 560.14 845 560.6C853.2 561.06 870.6 561.89 878.4 562.2C886.2 562.51 892.67 562.7 900.7 562.8C912.82 562.95 952.79 563.06 965 563.3C973.25 563.46 980.34 564.26 987.9 564.5C995.46 564.74 1009.48 564.69 1019 565C1028.52 565.31 1047.78 566.42 1055.9 566.7C1063.49 566.96 1074.05 566.96 1077 567" fill="none" stroke="#9acd32" stroke-width="0.8" stroke-linejoin="round"/>
<path d="M853.4 577.3 L887.4 577.3" fill="none" stroke="#9acd32" stroke-width="0.8" stroke-linejoin="round"/>
<path d="M955.4 576.6 L960 576.4" fill="none" stroke="#9acd32" stroke-width="0.8" stroke-linejoin="round"/>
<path d="M956 576.1L1076 576" fill="none" stroke="#c2e28f" stroke-width="1.9" stroke-linejoin="round"/>
<path d="M887.4 577.4L955.4 577.4" fill="none" stroke="#5f8220" stroke-width="1.3" stroke-linejoin="round"/>
<g transform="translate(979.05 155.3)" font-family="Liberation Serif" font-size="9.6" fill="#2a2a2a" stroke="#2a2a2a" stroke-width="0.16" text-anchor="middle"><text transform="scale(0.9 1)" x="2.54 6.7 12.69 17.77" xml:space="preserve">1.30</text><text transform="scale(0.685 1)" x="36.69" xml:space="preserve">m</text></g>
<text x="1011.04" y="155.6" font-family="'Liberation Serif','Noto Serif CJK SC',serif" font-size="9.15" fill="#2a2a2a" stroke="#2a2a2a" stroke-width="0.2">缺陷</text>
<g transform="translate(979.05 183.6)" font-family="Liberation Serif" font-size="9.6" fill="#2a2a2a" stroke="#2a2a2a" stroke-width="0.16" text-anchor="middle"><text transform="scale(0.9 1)" x="2.54 6.7 12.69 17.77" xml:space="preserve">2.30</text><text transform="scale(0.685 1)" x="36.69" xml:space="preserve">m</text></g>
<text x="1011.04" y="183.9" font-family="'Liberation Serif','Noto Serif CJK SC',serif" font-size="9.15" fill="#2a2a2a" stroke="#2a2a2a" stroke-width="0.2">缺陷</text>
<g transform="translate(979.05 554.8)" font-family="Liberation Serif" font-size="9.6" fill="#2a2a2a" stroke="#2a2a2a" stroke-width="0.16" text-anchor="middle"><text transform="scale(0.9 1)" x="2.54 7.62 11.78 17.77 22.85" xml:space="preserve">21.90</text><text transform="scale(0.685 1)" x="43.36" xml:space="preserve">m</text></g>
<text x="1015.61" y="555.1" font-family="'Liberation Serif','Noto Serif CJK SC',serif" font-size="9.15" fill="#2a2a2a" stroke="#2a2a2a" stroke-width="0.2">沉渣</text>
<g transform="translate(979.05 581.35)" font-family="Liberation Serif" font-size="9.6" fill="#2a2a2a" stroke="#2a2a2a" stroke-width="0.16" text-anchor="middle"><text transform="scale(0.9 1)" x="2.54 7.62 11.78 17.77 22.85" xml:space="preserve">22.80</text><text transform="scale(0.685 1)" x="43.36" xml:space="preserve">m</text></g>
<text x="1015.61" y="581.65" font-family="'Liberation Serif','Noto Serif CJK SC',serif" font-size="9.15" fill="#2a2a2a" stroke="#2a2a2a" stroke-width="0.2">沉渣</text>
<path d="M2.95 131.5H1077" stroke="#262626" stroke-width="0.9"/>
<path d="M22.35 125.2V584.6" stroke="#3e3e42" stroke-width="0.98"/>
<path d="M32.04 127.9V131.5M41.72 127.9V131.5M51.41 127.9V131.5M61.09 127.9V131.5M70.78 125.2V131.5M80.47 127.9V131.5M90.15 127.9V131.5M99.84 127.9V131.5M109.52 127.9V131.5M119.21 125.2V131.5M128.9 127.9V131.5M138.58 127.9V131.5M148.27 127.9V131.5M157.95 127.9V131.5M167.64 125.2V131.5M177.33 127.9V131.5M187.01 127.9V131.5M196.7 127.9V131.5M206.38 127.9V131.5M216.07 125.2V131.5M225.76 127.9V131.5M235.44 127.9V131.5M245.13 127.9V131.5M254.81 127.9V131.5M264.5 125.2V131.5M274.19 127.9V131.5M283.87 127.9V131.5M293.56 127.9V131.5M303.24 127.9V131.5M312.93 125.2V131.5M322.62 127.9V131.5M332.3 127.9V131.5M341.99 127.9V131.5M351.67 127.9V131.5M17.05 147.03H22.35M17.05 162.56H22.35M17.05 178.09H22.35M17.05 193.63H22.35M12.15 209.16H22.35M17.05 224.69H22.35M17.05 240.22H22.35M17.05 255.75H22.35M17.05 271.28H22.35M12.15 286.82H22.35M17.05 302.35H22.35M17.05 317.88H22.35M17.05 333.41H22.35M17.05 348.94H22.35M12.15 364.47H22.35M17.05 380H22.35M17.05 395.54H22.35M17.05 411.07H22.35M17.05 426.6H22.35M12.15 442.13H22.35M17.05 457.66H22.35M17.05 473.19H22.35M17.05 488.73H22.35M17.05 504.26H22.35M12.15 519.79H22.35M17.05 535.32H22.35M17.05 550.85H22.35M17.05 566.38H22.35M135.35 578.5V584.4M248.35 578.5V584.4" stroke="#444" stroke-width="0.9" fill="none"/>
<text transform="translate(23.15 124.9) scale(0.83 1)" font-family="Liberation Sans" font-size="8.5" fill="#3c3c3c" text-anchor="start">0</text>
<text transform="translate(71.58 124.9) scale(0.83 1)" font-family="Liberation Sans" font-size="8.5" fill="#3c3c3c" text-anchor="start">1</text>
<text transform="translate(120.01 124.9) scale(0.83 1)" font-family="Liberation Sans" font-size="8.5" fill="#3c3c3c" text-anchor="start">2</text>
<text transform="translate(168.44 124.9) scale(0.83 1)" font-family="Liberation Sans" font-size="8.5" fill="#3c3c3c" text-anchor="start">3</text>
<text transform="translate(216.87 124.9) scale(0.83 1)" font-family="Liberation Sans" font-size="8.5" fill="#3c3c3c" text-anchor="start">4</text>
<text transform="translate(265.3 124.9) scale(0.83 1)" font-family="Liberation Sans" font-size="8.5" fill="#3c3c3c" text-anchor="start">5</text>
<text transform="translate(313.73 124.9) scale(0.83 1)" font-family="Liberation Sans" font-size="8.5" fill="#3c3c3c" text-anchor="start">6</text>
<g transform="translate(342.9 125)" font-family="Liberation Serif" font-size="8" fill="#222" stroke="#222" stroke-width="0.16" text-anchor="middle"><text transform="scale(0.9 1)" x="2.11" xml:space="preserve">k</text><text transform="scale(0.684 1)" x="8.33" xml:space="preserve">m</text><text transform="scale(0.9 1)" x="10.56 14.78" xml:space="preserve">/s</text></g>
<text transform="translate(23.35 590.8) scale(0.83 1)" font-family="Liberation Sans" font-size="8.5" fill="#111" text-anchor="start">150</text>
<text transform="translate(136.85 590.8) scale(0.83 1)" font-family="Liberation Sans" font-size="8.5" fill="#111" text-anchor="start">100</text>
<text transform="translate(248.65 590.8) scale(0.83 1)" font-family="Liberation Sans" font-size="8.5" fill="#111" text-anchor="start">50</text>
<g transform="translate(353.1 590.6)" font-family="Liberation Serif" font-size="8" fill="#222" stroke="#222" stroke-width="0.16" text-anchor="middle"><text transform="scale(0.897 1)" x="2.06" xml:space="preserve">d</text><text transform="scale(0.673 1)" x="8.25" xml:space="preserve">B</text></g>
<text transform="translate(3.45 139.1) scale(0.95 1)" font-family="Liberation Sans" font-size="8.5" fill="#111" text-anchor="start">0</text>
<text transform="translate(3.45 216.76) scale(0.95 1)" font-family="Liberation Sans" font-size="8.5" fill="#111" text-anchor="start">4</text>
<text transform="translate(3.45 294.42) scale(0.95 1)" font-family="Liberation Sans" font-size="8.5" fill="#111" text-anchor="start">8</text>
<text transform="translate(3.45 372.07) scale(0.95 1)" font-family="Liberation Sans" font-size="8.5" fill="#111" text-anchor="start">12</text>
<text transform="translate(3.45 449.73) scale(0.95 1)" font-family="Liberation Sans" font-size="8.5" fill="#111" text-anchor="start">16</text>
<text transform="translate(3.45 517.59) scale(0.95 1)" font-family="Liberation Sans" font-size="8.5" fill="#111" text-anchor="start">20</text>
<path d="M380.6 125.2V584.6" stroke="#3e3e42" stroke-width="0.98"/>
<path d="M390.29 127.9V131.5M399.97 127.9V131.5M409.66 127.9V131.5M419.34 127.9V131.5M429.03 125.2V131.5M438.72 127.9V131.5M448.4 127.9V131.5M458.09 127.9V131.5M467.77 127.9V131.5M477.46 125.2V131.5M487.15 127.9V131.5M496.83 127.9V131.5M506.52 127.9V131.5M516.2 127.9V131.5M525.89 125.2V131.5M535.58 127.9V131.5M545.26 127.9V131.5M554.95 127.9V131.5M564.63 127.9V131.5M574.32 125.2V131.5M584.01 127.9V131.5M593.69 127.9V131.5M603.38 127.9V131.5M613.06 127.9V131.5M622.75 125.2V131.5M632.44 127.9V131.5M642.12 127.9V131.5M651.81 127.9V131.5M661.49 127.9V131.5M671.18 125.2V131.5M680.87 127.9V131.5M690.55 127.9V131.5M700.24 127.9V131.5M709.92 127.9V131.5M375.3 147.03H380.6M375.3 162.56H380.6M375.3 178.09H380.6M375.3 193.63H380.6M370.4 209.16H380.6M375.3 224.69H380.6M375.3 240.22H380.6M375.3 255.75H380.6M375.3 271.28H380.6M370.4 286.82H380.6M375.3 302.35H380.6M375.3 317.88H380.6M375.3 333.41H380.6M375.3 348.94H380.6M370.4 364.47H380.6M375.3 380H380.6M375.3 395.54H380.6M375.3 411.07H380.6M375.3 426.6H380.6M370.4 442.13H380.6M375.3 457.66H380.6M375.3 473.19H380.6M375.3 488.73H380.6M375.3 504.26H380.6M370.4 519.79H380.6M375.3 535.32H380.6M375.3 550.85H380.6M375.3 566.38H380.6M493.6 578.5V584.4M606.6 578.5V584.4" stroke="#444" stroke-width="0.9" fill="none"/>
<text transform="translate(381.4 124.9) scale(0.83 1)" font-family="Liberation Sans" font-size="8.5" fill="#3c3c3c" text-anchor="start">0</text>
<text transform="translate(429.83 124.9) scale(0.83 1)" font-family="Liberation Sans" font-size="8.5" fill="#3c3c3c" text-anchor="start">1</text>
<text transform="translate(478.26 124.9) scale(0.83 1)" font-family="Liberation Sans" font-size="8.5" fill="#3c3c3c" text-anchor="start">2</text>
<text transform="translate(526.69 124.9) scale(0.83 1)" font-family="Liberation Sans" font-size="8.5" fill="#3c3c3c" text-anchor="start">3</text>
<text transform="translate(575.12 124.9) scale(0.83 1)" font-family="Liberation Sans" font-size="8.5" fill="#3c3c3c" text-anchor="start">4</text>
<text transform="translate(623.55 124.9) scale(0.83 1)" font-family="Liberation Sans" font-size="8.5" fill="#3c3c3c" text-anchor="start">5</text>
<text transform="translate(671.98 124.9) scale(0.83 1)" font-family="Liberation Sans" font-size="8.5" fill="#3c3c3c" text-anchor="start">6</text>
<g transform="translate(701.05 125)" font-family="Liberation Serif" font-size="8" fill="#222" stroke="#222" stroke-width="0.16" text-anchor="middle"><text transform="scale(0.9 1)" x="2.11" xml:space="preserve">k</text><text transform="scale(0.684 1)" x="8.33" xml:space="preserve">m</text><text transform="scale(0.9 1)" x="10.56 14.78" xml:space="preserve">/s</text></g>
<text transform="translate(381.6 590.8) scale(0.83 1)" font-family="Liberation Sans" font-size="8.5" fill="#111" text-anchor="start">150</text>
<text transform="translate(495.1 590.8) scale(0.83 1)" font-family="Liberation Sans" font-size="8.5" fill="#111" text-anchor="start">100</text>
<text transform="translate(606.9 590.8) scale(0.83 1)" font-family="Liberation Sans" font-size="8.5" fill="#111" text-anchor="start">50</text>
<g transform="translate(711.25 590.6)" font-family="Liberation Serif" font-size="8" fill="#222" stroke="#222" stroke-width="0.16" text-anchor="middle"><text transform="scale(0.897 1)" x="2.06" xml:space="preserve">d</text><text transform="scale(0.673 1)" x="8.25" xml:space="preserve">B</text></g>
<text transform="translate(362 139.1) scale(0.95 1)" font-family="Liberation Sans" font-size="8.5" fill="#111" text-anchor="start">0</text>
<text transform="translate(362 216.76) scale(0.95 1)" font-family="Liberation Sans" font-size="8.5" fill="#111" text-anchor="start">4</text>
<text transform="translate(362 294.42) scale(0.95 1)" font-family="Liberation Sans" font-size="8.5" fill="#111" text-anchor="start">8</text>
<text transform="translate(362 372.07) scale(0.95 1)" font-family="Liberation Sans" font-size="8.5" fill="#111" text-anchor="start">12</text>
<text transform="translate(362 449.73) scale(0.95 1)" font-family="Liberation Sans" font-size="8.5" fill="#111" text-anchor="start">16</text>
<text transform="translate(362 517.59) scale(0.95 1)" font-family="Liberation Sans" font-size="8.5" fill="#111" text-anchor="start">20</text>
<path d="M739 125.2V584.6" stroke="#3e3e42" stroke-width="0.98"/>
<path d="M748.69 127.9V131.5M758.37 127.9V131.5M768.06 127.9V131.5M777.74 127.9V131.5M787.43 125.2V131.5M797.12 127.9V131.5M806.8 127.9V131.5M816.49 127.9V131.5M826.17 127.9V131.5M835.86 125.2V131.5M845.55 127.9V131.5M855.23 127.9V131.5M864.92 127.9V131.5M874.6 127.9V131.5M884.29 125.2V131.5M893.98 127.9V131.5M903.66 127.9V131.5M913.35 127.9V131.5M923.03 127.9V131.5M932.72 125.2V131.5M942.41 127.9V131.5M952.09 127.9V131.5M961.78 127.9V131.5M971.46 127.9V131.5M981.15 125.2V131.5M990.84 127.9V131.5M1000.52 127.9V131.5M1010.21 127.9V131.5M1019.89 127.9V131.5M1029.58 125.2V131.5M1039.27 127.9V131.5M1048.95 127.9V131.5M1058.64 127.9V131.5M1068.32 127.9V131.5M733.7 147.03H739M733.7 162.56H739M733.7 178.09H739M733.7 193.63H739M728.8 209.16H739M733.7 224.69H739M733.7 240.22H739M733.7 255.75H739M733.7 271.28H739M728.8 286.82H739M733.7 302.35H739M733.7 317.88H739M733.7 333.41H739M733.7 348.94H739M728.8 364.47H739M733.7 380H739M733.7 395.54H739M733.7 411.07H739M733.7 426.6H739M728.8 442.13H739M733.7 457.66H739M733.7 473.19H739M733.7 488.73H739M733.7 504.26H739M728.8 519.79H739M733.7 535.32H739M733.7 550.85H739M733.7 566.38H739M852 578.5V584.4M965 578.5V584.4" stroke="#444" stroke-width="0.9" fill="none"/>
<text transform="translate(739.8 124.9) scale(0.83 1)" font-family="Liberation Sans" font-size="8.5" fill="#3c3c3c" text-anchor="start">0</text>
<text transform="translate(788.23 124.9) scale(0.83 1)" font-family="Liberation Sans" font-size="8.5" fill="#3c3c3c" text-anchor="start">1</text>
<text transform="translate(836.66 124.9) scale(0.83 1)" font-family="Liberation Sans" font-size="8.5" fill="#3c3c3c" text-anchor="start">2</text>
<text transform="translate(885.09 124.9) scale(0.83 1)" font-family="Liberation Sans" font-size="8.5" fill="#3c3c3c" text-anchor="start">3</text>
<text transform="translate(933.52 124.9) scale(0.83 1)" font-family="Liberation Sans" font-size="8.5" fill="#3c3c3c" text-anchor="start">4</text>
<text transform="translate(981.95 124.9) scale(0.83 1)" font-family="Liberation Sans" font-size="8.5" fill="#3c3c3c" text-anchor="start">5</text>
<text transform="translate(1030.38 124.9) scale(0.83 1)" font-family="Liberation Sans" font-size="8.5" fill="#3c3c3c" text-anchor="start">6</text>
<g transform="translate(1058.4 125)" font-family="Liberation Serif" font-size="8" fill="#222" stroke="#222" stroke-width="0.16" text-anchor="middle"><text transform="scale(0.9 1)" x="2.11" xml:space="preserve">k</text><text transform="scale(0.684 1)" x="8.33" xml:space="preserve">m</text><text transform="scale(0.9 1)" x="10.56 14.78" xml:space="preserve">/s</text></g>
<text transform="translate(740 590.8) scale(0.83 1)" font-family="Liberation Sans" font-size="8.5" fill="#111" text-anchor="start">150</text>
<text transform="translate(853.5 590.8) scale(0.83 1)" font-family="Liberation Sans" font-size="8.5" fill="#111" text-anchor="start">100</text>
<text transform="translate(965.3 590.8) scale(0.83 1)" font-family="Liberation Sans" font-size="8.5" fill="#111" text-anchor="start">50</text>
<g transform="translate(1068.6 590.6)" font-family="Liberation Serif" font-size="8" fill="#222" stroke="#222" stroke-width="0.16" text-anchor="middle"><text transform="scale(0.897 1)" x="2.06" xml:space="preserve">d</text><text transform="scale(0.673 1)" x="8.25" xml:space="preserve">B</text></g>
<text transform="translate(720.15 139.1) scale(0.95 1)" font-family="Liberation Sans" font-size="8.5" fill="#111" text-anchor="start">0</text>
<text transform="translate(720.15 216.76) scale(0.95 1)" font-family="Liberation Sans" font-size="8.5" fill="#111" text-anchor="start">4</text>
<text transform="translate(720.15 294.42) scale(0.95 1)" font-family="Liberation Sans" font-size="8.5" fill="#111" text-anchor="start">8</text>
<text transform="translate(720.15 372.07) scale(0.95 1)" font-family="Liberation Sans" font-size="8.5" fill="#111" text-anchor="start">12</text>
<text transform="translate(720.15 449.73) scale(0.95 1)" font-family="Liberation Sans" font-size="8.5" fill="#111" text-anchor="start">16</text>
<text transform="translate(720.15 517.59) scale(0.95 1)" font-family="Liberation Sans" font-size="8.5" fill="#111" text-anchor="start">20</text>
</svg>
</body></html>
